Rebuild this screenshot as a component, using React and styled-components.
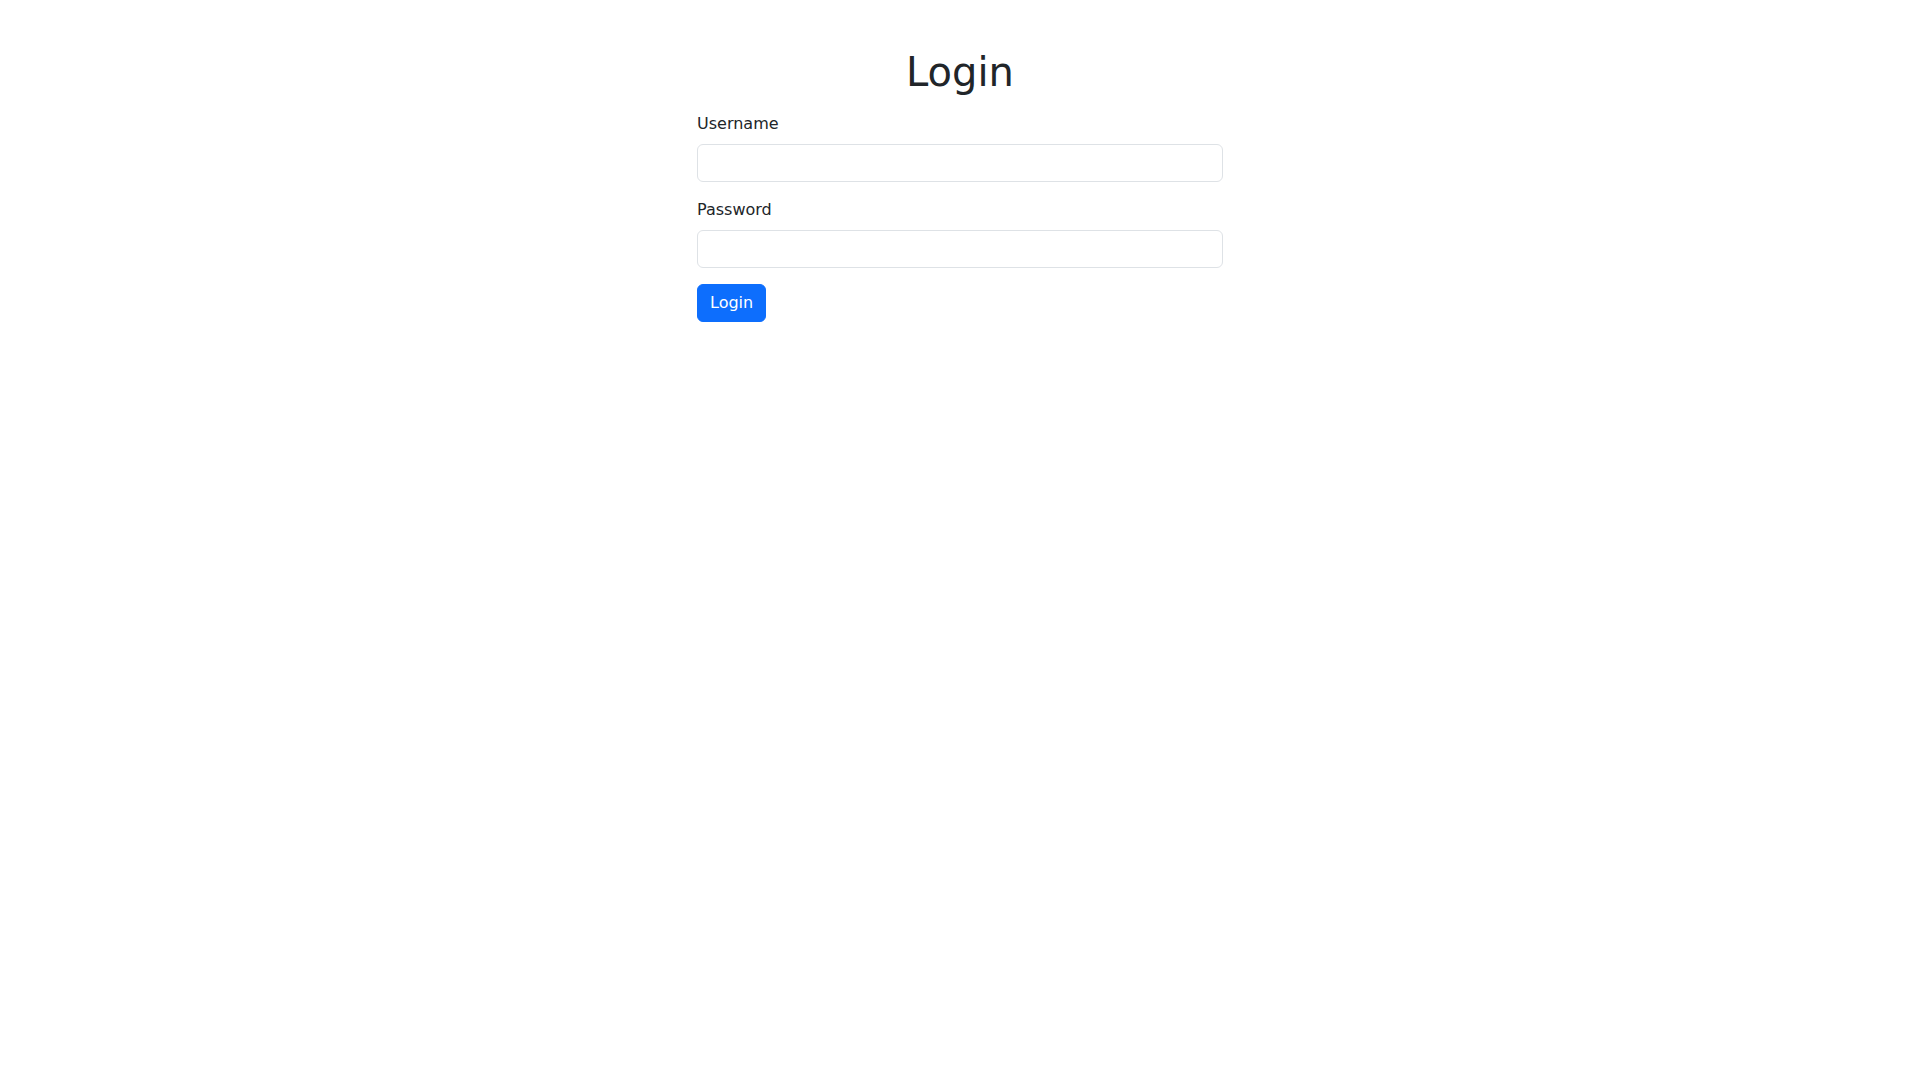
import React from "react";
import styled, { createGlobalStyle } from "styled-components";

const Global = createGlobalStyle`
  *, *::before, *::after { box-sizing: border-box; }
  body {
    margin: 0;
    background: #fff;
    color: #212529;
    font-family: "DejaVu Sans", "Liberation Sans", sans-serif;
    font-size: 16px;
    line-height: 1.5;
  }
`;

const Container = styled.div`
  width: 1320px;
  margin: 0 auto;
  padding: 0 12px;
`;

const Row = styled.div`
  display: flex;
  justify-content: center;
  margin: 0 -12px;
`;

const Col = styled.div`
  width: 550px;
  padding: 0 12px;
`;

const Title = styled.h1`
  margin: 48px 0 16px;
  font-size: 40px;
  font-weight: 500;
  line-height: 1.2;
  text-align: center;
`;

const Field = styled.div`
  margin-bottom: 16px;
`;

const Label = styled.label`
  display: block;
  margin-bottom: 8px;
`;

const Input = styled.input`
  display: block;
  width: 100%;
  height: 38px;
  padding: 6px 12px;
  font: inherit;
  color: #212529;
  background: #fff;
  border: 1px solid #dee2e6;
  border-radius: 6px;
  outline: none;
`;

const Button = styled.button`
  display: inline-block;
  padding: 6px 12px;
  font: inherit;
  line-height: 1.5;
  color: #fff;
  background: #0d6efd;
  border: 1px solid #0d6efd;
  border-radius: 6px;
  cursor: pointer;
`;

export default function App() {
  return (
    <>
      <Global />
      <Container>
        <Row>
          <Col>
            <Title>Login</Title>
            <form onSubmit={(e) => e.preventDefault()}>
              <Field>
                <Label htmlFor="username">Username</Label>
                <Input id="username" type="text" />
              </Field>
              <Field>
                <Label htmlFor="password">Password</Label>
                <Input id="password" type="password" />
              </Field>
              <Button type="submit">Login</Button>
            </form>
          </Col>
        </Row>
      </Container>
    </>
  );
}
